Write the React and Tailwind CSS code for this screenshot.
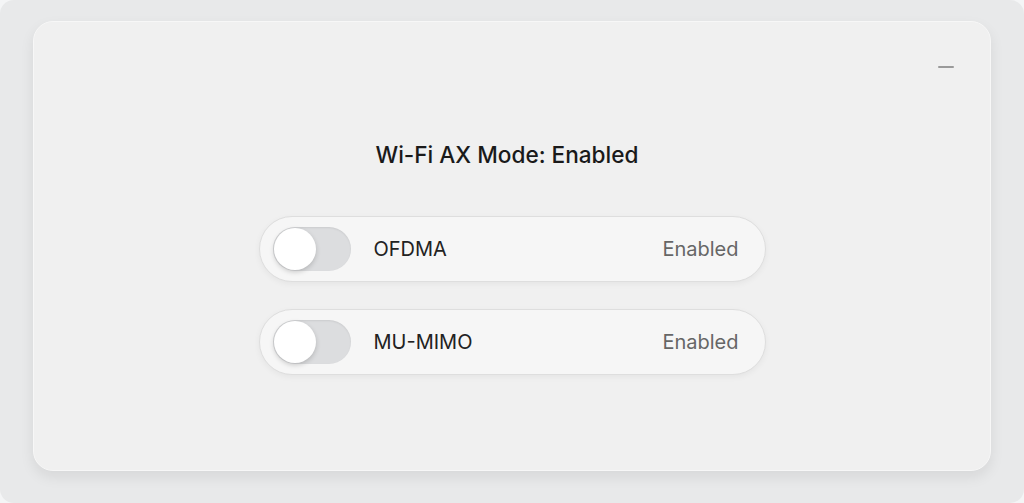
import React from "react";

function Row({ label }) {
  return (
    <div className="flex h-[66px] w-[507px] items-center rounded-full border border-[#dedede] bg-[#f6f6f6] pl-[13px] pr-[26px] shadow-[0_2px_6px_rgba(0,0,0,0.05)]">
      <div className="relative h-[44px] w-[78px] rounded-full bg-[#dcdddf] shadow-[inset_0_1px_2px_rgba(0,0,0,0.08)]">
        <div className="absolute left-[1px] top-[1px] h-[42px] w-[42px] rounded-full bg-white shadow-[0_2px_5px_rgba(0,0,0,0.18)]" />
      </div>
      <span className="ml-[23px] text-[20px] text-[#222] [font-family:Inter,'Noto_Sans',sans-serif]">{label}</span>
      <span className="ml-auto text-[20px] text-[#666] [font-family:Inter,'Noto_Sans',sans-serif]">Enabled</span>
    </div>
  );
}

export default function App() {
  return (
    <div className="h-[503px] w-[1024px] bg-[#f4f5f6]">
      <div className="flex h-full w-full rounded-[14px] bg-[#e8e9ea] px-[33px] pb-[32px] pt-[21px]">
        <div className="relative flex flex-1 flex-col items-center rounded-[20px] border border-[#f7f7f7] bg-[#f0f0f0] shadow-[0_6px_14px_rgba(0,0,0,0.08)]">
          <div className="absolute right-[36px] top-[44px] h-[2px] w-[16px] rounded bg-[#9a9a9a]" />
          <h1 className="mr-[10px] mt-[116px] text-[22.6px] font-medium text-[#1a1a1a] [font-family:Inter,'Noto_Sans',sans-serif]">
            Wi-Fi AX Mode: Enabled
          </h1>
          <div className="mt-[44px] flex flex-col gap-[27px]">
            <Row label="OFDMA" />
            <Row label="MU-MIMO" />
          </div>
        </div>
      </div>
    </div>
  );
}
